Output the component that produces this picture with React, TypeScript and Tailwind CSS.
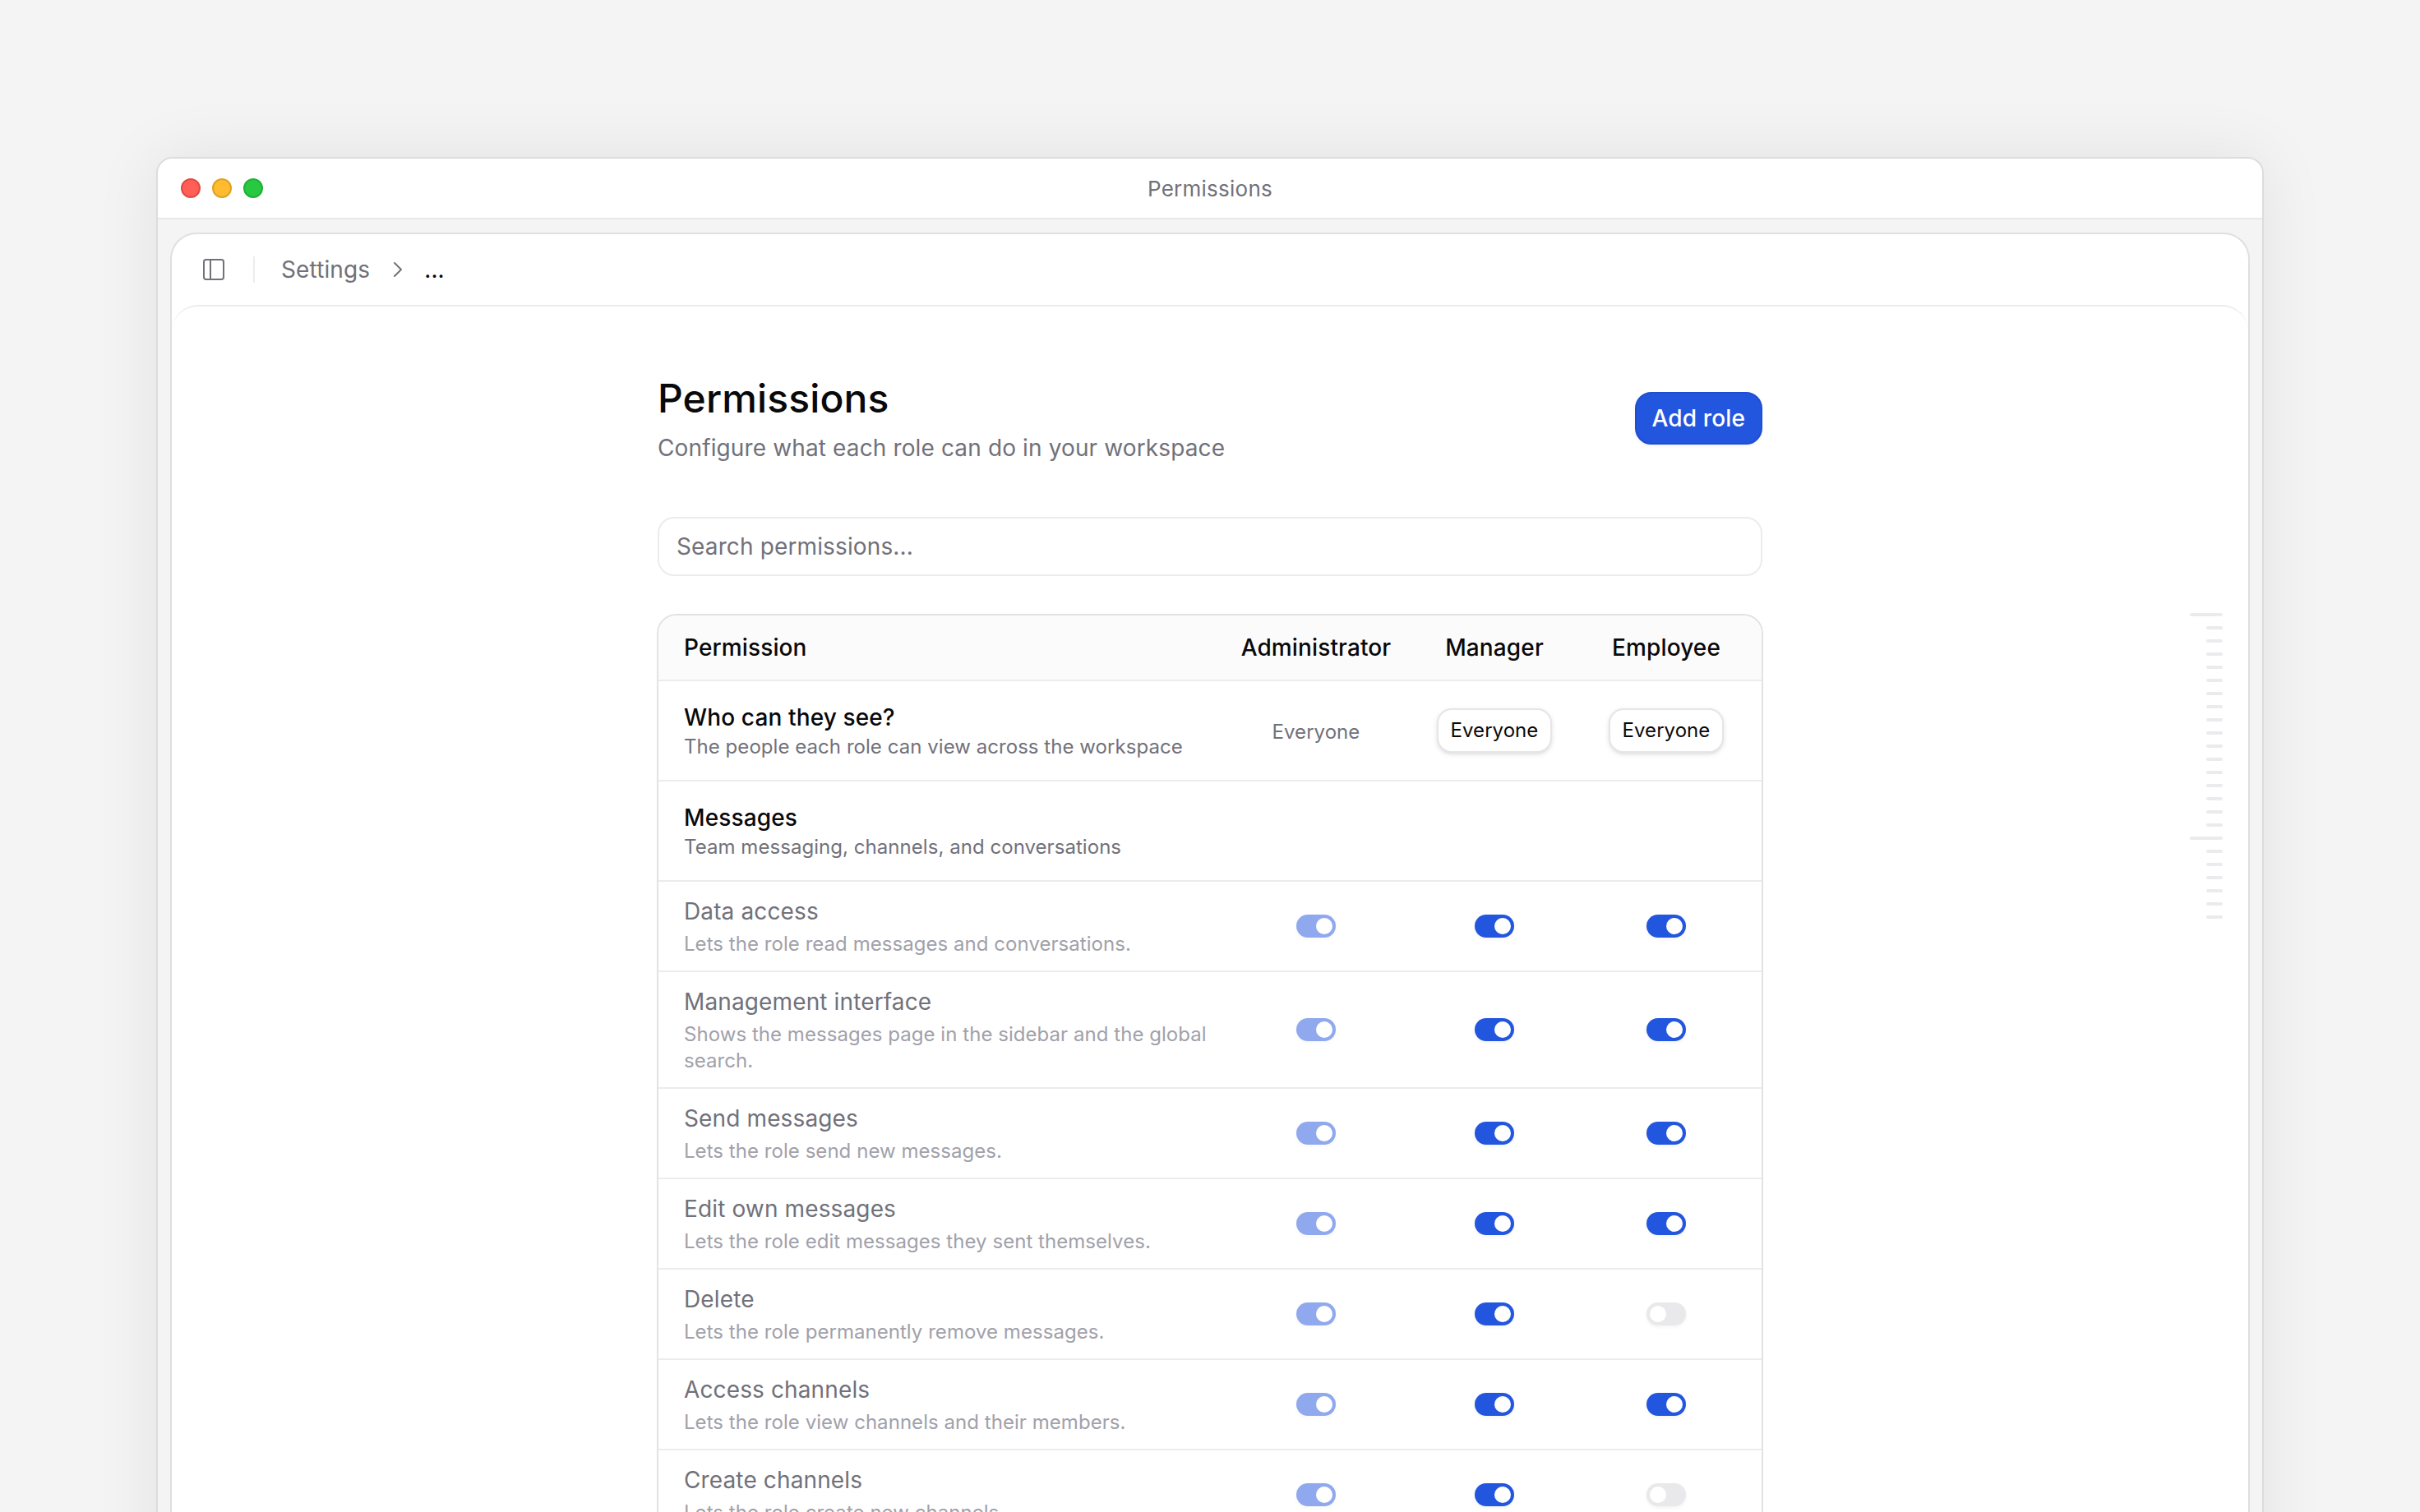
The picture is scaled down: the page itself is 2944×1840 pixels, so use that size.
import { ChevronRight, PanelLeft } from "lucide-react";

type Perm = {
    name: string
    desc: string
    employee: boolean
}

const perms: Perm[] = [
    { name: "Data access", desc: "Lets the role read messages and conversations.", employee: true },
    { name: "Management interface", desc: "Shows the messages page in the sidebar and the global search.", employee: true },
    { name: "Send messages", desc: "Lets the role send new messages.", employee: true },
    { name: "Edit own messages", desc: "Lets the role edit messages they sent themselves.", employee: true },
    { name: "Delete", desc: "Lets the role permanently remove messages.", employee: false },
    { name: "Access channels", desc: "Lets the role view channels and their members.", employee: true },
    { name: "Create channels", desc: "Lets the role create new channels.", employee: false },
]

// name column, then Administrator, Manager, Employee
const rowGrid = "grid grid-cols-[1fr_124px_93px_116px] items-center"

function Toggle({ on, faded }: { on: boolean; faded?: boolean }) {
    return (
        <div className={`flex h-3.5 w-6 rounded-full p-0.5 shadow-xs ${on ? "justify-end bg-[#2356de]" : "justify-start bg-[#e9e9eb]"} ${faded ? "opacity-50" : ""}`}>
            <div className="size-2.5 rounded-full bg-white" />
        </div>
    )
}

function Pill() {
    return (
        <div className="rounded-[9px] border border-[#e6e6e8] bg-white px-[7.5px] py-1 text-xs leading-[17px] tracking-[0.002em] text-[#09090b] shadow-sm">
            Everyone
        </div>
    )
}

function Ruler() {
    return (
        <div className="absolute right-[15.5px] top-[186.5px] flex flex-col items-end gap-1.5">
            {Array.from({ length: 24 }).map((_, i) => (
                <div key={i} className={`h-0.5 rounded-full bg-[#ebebee] ${i === 0 || i === 17 ? "w-5" : "w-2.5"}`} />
            ))}
        </div>
    )
}

export default function App() {
    return (
        <div className="h-screen overflow-hidden bg-[#f4f4f4] font-[Inter,sans-serif] tracking-[0.004em]">
            <div className="[zoom:2]">
                <div className="mx-auto mt-[95.5px] w-[1282px] overflow-hidden rounded-t-[10px] border border-[#dcdcdc] bg-[#f4f4f4] shadow-[0_0_40px_rgba(0,0,0,0.08)]">

                    {/* title bar */}
                    <div className="grid h-[37px] grid-cols-[1fr_auto_1fr] items-center border-b border-[#e8e8e8] bg-white px-3.5">
                        <div className="flex gap-[7px]">
                            <div className="size-3 rounded-full border border-[#e5483f] bg-[#ff5f57]" />
                            <div className="size-3 rounded-full border border-[#e0a028] bg-[#febc2e]" />
                            <div className="size-3 rounded-full border border-[#20b038] bg-[#28c840]" />
                        </div>
                        <div className="text-[13px] tracking-[0.01em] text-[#71717a]">Permissions</div>
                        <div />
                    </div>

                    <div className="px-[7.5px] pt-2">
                        <div className="rounded-t-2xl border border-b-0 border-[#dfdfdf] bg-white">

                            {/* breadcrumb */}
                            <div className="flex h-[43px] items-center pl-[17.5px]">
                                <PanelLeft className="size-4 text-[#71717a]" strokeWidth={1.5} />
                                <div className="mx-4 h-4 w-px bg-[#ececec]" />
                                <span className="text-sm text-[#71717a]">Settings</span>
                                <ChevronRight className="ml-[9px] size-4 text-[#71717a]" strokeWidth={1.5} />
                                <span className="ml-2 text-sm text-[#09090b]">...</span>
                            </div>

                            <div className="relative h-[800px] rounded-t-2xl border-t border-[#ececec] bg-white pt-10">
                                <Ruler />
                                <div className="mx-auto w-[672px]">

                                    <div className="mb-8 flex items-center justify-between">
                                        <div>
                                            <h1 className="text-2xl font-medium text-[#09090b]">Permissions</h1>
                                            <p className="mt-1 text-sm text-[#71717a]">Configure what each role can do in your workspace</p>
                                        </div>
                                        <button className="h-8 rounded-[10px] border border-[#1f4fd0] bg-[#2356de] px-[9.5px] text-sm font-medium text-white shadow-xs">
                                            Add role
                                        </button>
                                    </div>

                                    <input
                                        readOnly
                                        placeholder="Search permissions..."
                                        className="mb-[23px] block h-9 w-full rounded-[10px] border border-[#ececec] bg-white px-[10.5px] text-sm outline-none placeholder:text-[#71717a]"
                                    />

                                    <div className="-mx-[0.5px] overflow-hidden rounded-t-xl border border-b-0 border-[#e2e2e2] bg-white">

                                        <div className={`${rowGrid} h-10 border-b border-[#ececec] bg-[#fbfbfb] text-sm font-medium text-[#09090b]`}>
                                            <div className="pl-[15.5px]">Permission</div>
                                            <div className="text-center">Administrator</div>
                                            <div className="text-center">Manager</div>
                                            <div className="text-center">Employee</div>
                                        </div>

                                        <div className={`${rowGrid} border-b border-[#ececec] py-3`}>
                                            <div className="pl-[15.5px]">
                                                <div className="text-sm font-medium text-[#09090b]">Who can they see?</div>
                                                <div className="text-xs leading-4 tracking-[0.002em] text-[#71717a]">The people each role can view across the workspace</div>
                                            </div>
                                            <div className="pt-0.5 text-center text-xs tracking-[0.002em] text-[#71717a]">Everyone</div>
                                            <div className="flex justify-center"><Pill /></div>
                                            <div className="flex justify-center"><Pill /></div>
                                        </div>

                                        <div className="border-b border-[#ececec] py-3 pl-[15.5px]">
                                            <div className="text-sm font-medium text-[#09090b]">Messages</div>
                                            <div className="text-xs leading-4 tracking-[0.002em] text-[#71717a]">Team messaging, channels, and conversations</div>
                                        </div>

                                        {perms.map((p, i) => (
                                            <div key={i} className={`${rowGrid} border-b border-[#ececec] py-2`}>
                                                <div className="pl-[15.5px]">
                                                    <div className="text-sm text-[#71717a]">{p.name}</div>
                                                    <div className="mt-0.5 text-xs leading-4 tracking-[0.002em] text-[#a1a1aa]">{p.desc}</div>
                                                </div>
                                                <div className="flex justify-center"><Toggle on faded /></div>
                                                <div className="flex justify-center"><Toggle on /></div>
                                                <div className="flex justify-center"><Toggle on={p.employee} /></div>
                                            </div>
                                        ))}

                                    </div>
                                </div>
                            </div>
                        </div>
                    </div>
                </div>
            </div>
        </div>
    )
}
